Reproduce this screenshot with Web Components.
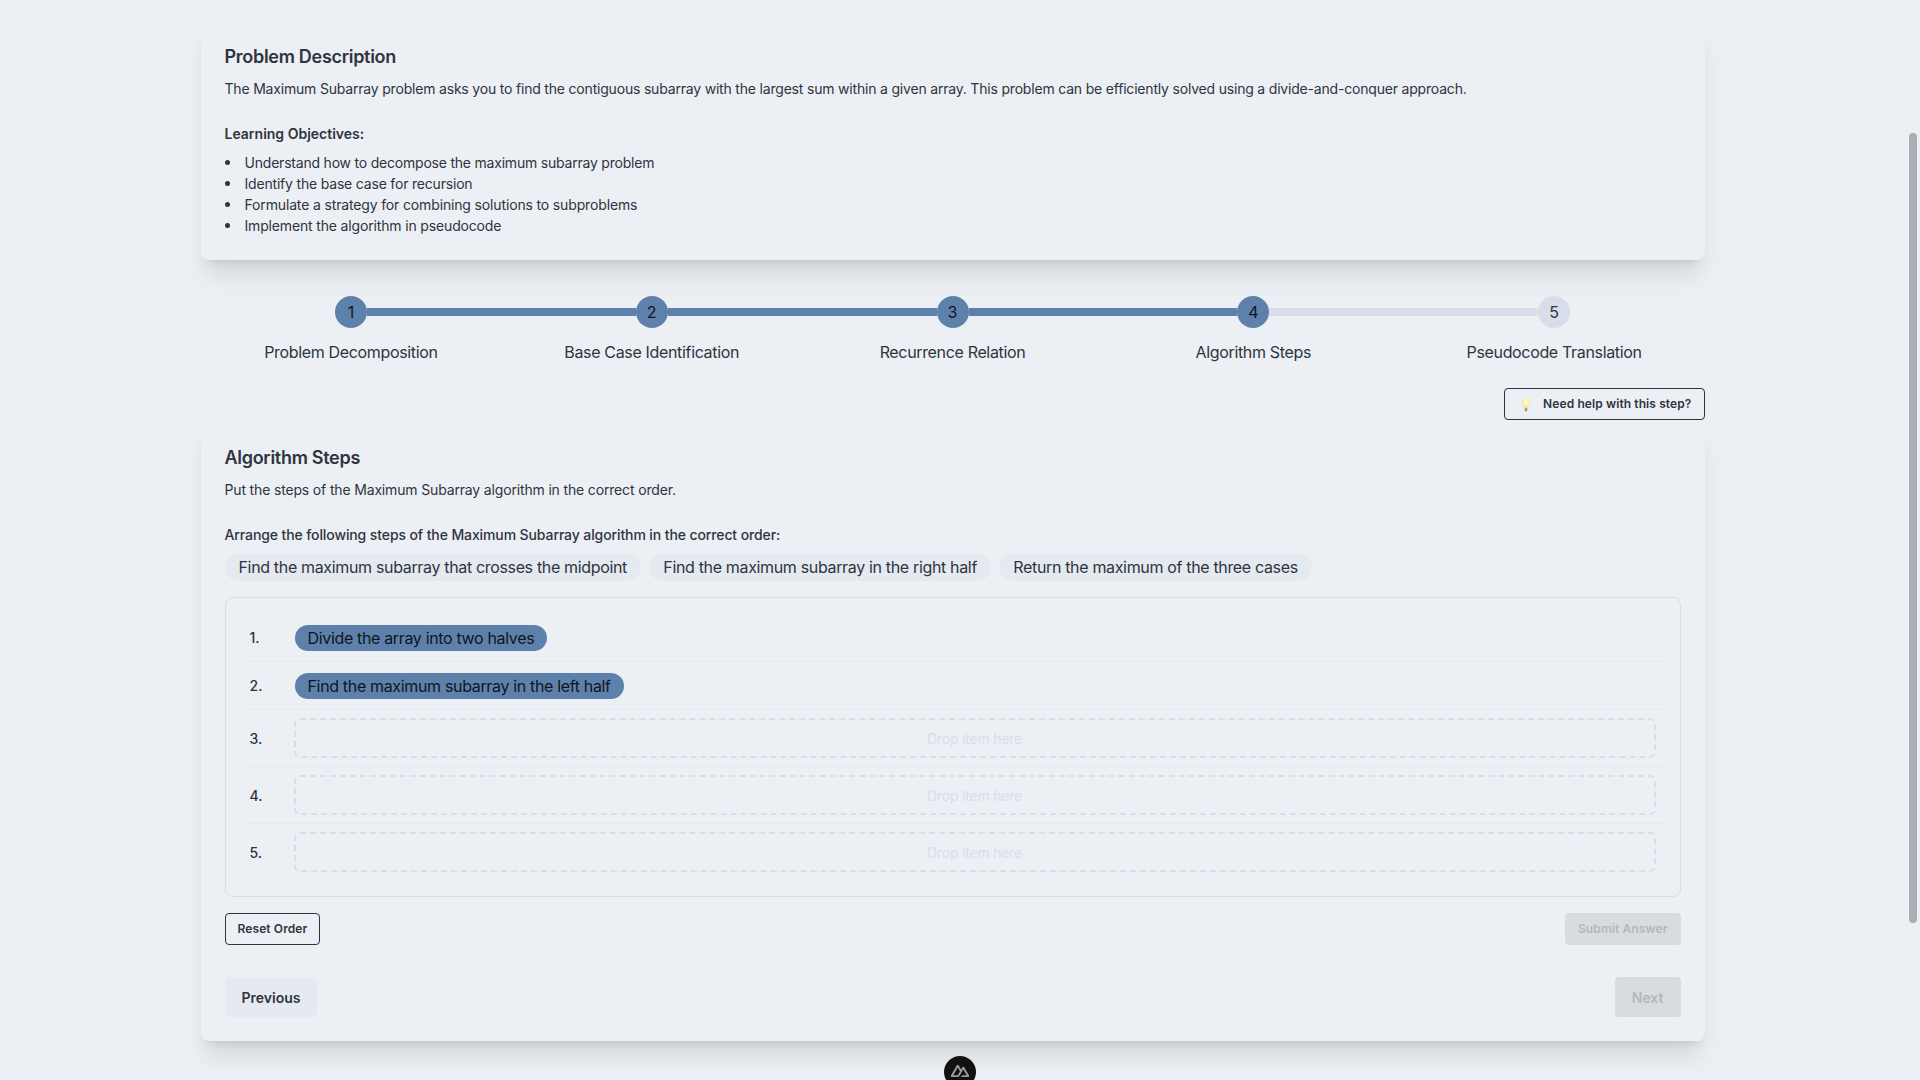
<!DOCTYPE html>
<html lang="en">
<head>
<meta charset="utf-8">
<title>Maximum Subarray</title>
<style>
html,body{margin:0;padding:0;height:100%;overflow:hidden;background:#eceff4;}
body{font-family:Inter,"Liberation Sans",sans-serif;color:#2e3440;}
</style>
</head>
<body>
<lesson-app>
  <lesson-card heading="Problem Description">
    <card-text style="letter-spacing:-.192px">The Maximum Subarray problem asks you to find the contiguous subarray with the largest sum within a given array. This problem can be efficiently solved using a divide-and-conquer approach.</card-text>
    <objective-list heading="Learning Objectives:">
      <li-item style="letter-spacing:-.21px">Understand how to decompose the maximum subarray problem</li-item>
      <li-item>Identify the base case for recursion</li-item>
      <li-item style="letter-spacing:-.148px">Formulate a strategy for combining solutions to subproblems</li-item>
      <li-item style="letter-spacing:-.157px">Implement the algorithm in pseudocode</li-item>
    </objective-list>
  </lesson-card>

  <step-tracker>
    <step-item n="1" state="done" first>Problem Decomposition</step-item>
    <step-item n="2" state="done">Base Case Identification</step-item>
    <step-item n="3" state="done">Recurrence Relation</step-item>
    <step-item n="4" state="current">Algorithm Steps</step-item>
    <step-item n="5" state="todo" last>Pseudocode Translation</step-item>
  </step-tracker>

  <help-row><ui-button kind="outline" bulb>Need help with this step?</ui-button></help-row>

  <lesson-card heading="Algorithm Steps">
    <card-text style="letter-spacing:-.16px">Put the steps of the Maximum Subarray algorithm in the correct order.</card-text>
    <order-exercise prompt="Arrange the following steps of the Maximum Subarray algorithm in the correct order:">
      <choice-pill slot="choices">Find the maximum subarray that crosses the midpoint</choice-pill>
      <choice-pill slot="choices">Find the maximum subarray in the right half</choice-pill>
      <choice-pill slot="choices">Return the maximum of the three cases</choice-pill>
      <order-row n="1."><choice-pill placed>Divide the array into two halves</choice-pill></order-row>
      <order-row n="2."><choice-pill placed>Find the maximum subarray in the left half</choice-pill></order-row>
      <order-row n="3." empty><drop-slot></drop-slot></order-row>
      <order-row n="4." empty><drop-slot></drop-slot></order-row>
      <order-row n="5." empty last><drop-slot></drop-slot></order-row>
      <ui-button slot="left" kind="outline">Reset Order</ui-button>
      <ui-button slot="right" kind="disabled">Submit Answer</ui-button>
    </order-exercise>
    <nav-row>
      <ui-button slot="left" kind="soft" size="lg">Previous</ui-button>
      <ui-button slot="right" kind="disabled" size="lg">Next</ui-button>
    </nav-row>
  </lesson-card>
</lesson-app>
<fake-scrollbar></fake-scrollbar>
<devtools-badge></devtools-badge>

<script>
function def(name, css, html, init){
  customElements.define(name, class extends HTMLElement{
    constructor(){super();this.attachShadow({mode:'open'});}
    connectedCallback(){
      const a=n=>this.getAttribute(n)||'';
      this.shadowRoot.innerHTML='<style>'+css+'</style>'+(typeof html==='function'?html(a,this):html);
    }
  });
}
def('lesson-app',`:host{display:block;width:1905px;box-sizing:border-box;padding:19px 200.5px 0;}`,`<slot></slot>`);
def('lesson-card',`:host{display:block;background:#eceff4;border-radius:8px;padding:24px;box-shadow:0 20px 25px -5px rgba(0,0,0,.1),0 8px 10px -6px rgba(0,0,0,.1);}
h2{margin:0 0 7px;font-size:18px;line-height:28px;font-weight:600;letter-spacing:-.29px;color:#2e3440;}`,a=>`<h2>${a('heading')}</h2><slot></slot>`);
def('card-text',`:host{display:block;font-size:14px;line-height:21px;letter-spacing:-.187px;color:#2e3440;margin-bottom:24px;}`,`<slot></slot>`);
def('objective-list',`:host{display:block;font-size:14px;line-height:21px;color:#2e3440;}
h3{margin:0 0 8px;font-size:14px;line-height:21px;font-weight:600;}`,a=>`<h3>${a('heading')}</h3><slot></slot>`);
def('li-item',`:host{display:flex;font-size:14px;line-height:21px;letter-spacing:-.19px;}
i{width:20px;flex:none;display:flex;align-items:center;}
i::before{content:"";width:5px;height:5px;border-radius:50%;background:#2e3440;margin-left:0;}`,`<i></i><span><slot></slot></span>`);
def('step-tracker',`:host{display:flex;margin-top:36px;}`,`<slot></slot>`);
def('step-item',`:host{display:flex;flex-direction:column;flex:1 1 0;min-width:0;}
.top{display:flex;align-items:center;height:32px;}
.ln{flex:1;height:8px;}
.c{width:32px;height:32px;border-radius:50%;flex:none;display:flex;align-items:center;justify-content:center;font-size:16px;line-height:24px;}
.lbl{margin-top:12px;text-align:center;font-size:16px;line-height:24px;letter-spacing:-.34px;color:#2e3440;}`,
(a,el)=>{
  const st=a('state'),blue='#5e81ac',grey='#d8dee9';
  const left=el.hasAttribute('first')?'transparent':(st==='todo'?grey:blue);
  const right=el.hasAttribute('last')?'transparent':(st==='done'?blue:grey);
  const bg=st==='todo'?grey:blue,col=st==='todo'?'#2e3440':'#0f1520';
  return `<div class="top"><div class="ln" style="background:${left}"></div><div class="c" style="background:${bg};color:${col}">${a('n')}</div><div class="ln" style="background:${right}"></div></div><div class="lbl"><slot></slot></div>`;
});
def('help-row',`:host{display:flex;justify-content:flex-end;margin-top:24px;}`,`<slot></slot>`);
def('ui-button',`:host{display:inline-flex;align-items:center;box-sizing:border-box;height:32px;padding:0 13px;border-radius:4px;font-size:12px;font-weight:600;line-height:16px;letter-spacing:.1px;white-space:nowrap;color:#2e3440;}
:host([kind=outline]){border:1px solid #2e3440;padding:0 12px;}
:host([kind=soft]){background:#e5e9f0;}
:host([kind=disabled]){background:#d8dbe0;color:#b4b7bd;}
:host([size=lg]){height:40px;padding:2px 17px 0;font-size:14px;line-height:20px;letter-spacing:0;}
svg{width:10px;height:15px;margin:0 12px 0 4px;flex:none;}`,(a,el)=>el.hasAttribute('bulb')?`<svg viewBox="0 0 12 16" preserveAspectRatio="none" aria-hidden="true"><defs><radialGradient id="g" cx=".5" cy=".4" r=".6"><stop offset="0" stop-color="#fffbe6"/><stop offset=".6" stop-color="#fff2ae"/><stop offset="1" stop-color="#f6d873"/></radialGradient></defs><path d="M6 .8C3.100.8 1.300 2.900 1.300 5.200c0 2.400 2.200 3.900 2.900 6.600h3.600c.7-2.700 2.900-4.200 2.900-6.600C10.700 2.900 8.900.8 6 .8z" fill="url(#g)"/><path d="M4.400 12h3.200v1.800L6.700 15.400H5.300L4.400 13.800z" fill="#8d8f92"/></svg><slot></slot>`:`<slot></slot>`);
def('order-exercise',`:host{display:block;}
.p{font-size:14px;line-height:21px;font-weight:500;letter-spacing:-.107px;color:#2e3440;margin-bottom:8px;}
.ch{display:flex;gap:8px;margin-bottom:16px;}
.box{border:1px solid #d8dee9;border-radius:8px;padding:16px;box-sizing:border-box;}
.act{display:flex;justify-content:space-between;margin-top:16px;}`,
a=>`<div class="p">${a('prompt')}</div><div class="ch"><slot name="choices"></slot></div><div class="box"><slot></slot></div><div class="act"><slot name="left"></slot><slot name="right"></slot></div>`);
def('choice-pill',`:host{display:inline-flex;align-items:center;box-sizing:border-box;height:28px;padding:0 14.3px 0 14px;border-radius:999px;background:#e5e9f0;font-size:16px;line-height:24px;letter-spacing:-.34px;color:#2e3440;white-space:nowrap;}
:host([placed]){height:26px;padding:0 13px 0 12.5px;background:#5e81ac;color:#0f1520;margin-left:1.5px;}`,`<slot></slot>`);
def('order-row',`:host{display:flex;align-items:center;padding:8px;border-bottom:1px solid #e5e9f0;min-height:31px;}
:host([last]){border-bottom:0;}
.n{width:44px;flex:none;font-size:14px;line-height:20px;font-weight:500;color:#2e3440;}
:host([empty]) .n{padding-top:2px;}
.s{flex:1;min-width:0;display:flex;}`,a=>`<div class="n">${a('n')}</div><div class="s"><slot></slot></div>`);
def('drop-slot',`:host{display:flex;align-items:center;justify-content:center;flex:1;box-sizing:border-box;height:40px;border:2px dashed #d8dee9;border-radius:6px;font-size:14px;letter-spacing:-.2px;color:#d8dee9;}`,`Drop item here`);
def('nav-row',`:host{display:flex;justify-content:space-between;margin-top:32px;}`,`<slot name="left"></slot><slot name="right"></slot>`);
def('fake-scrollbar',`:host{position:fixed;left:1909px;top:133px;width:8px;height:790px;border-radius:4px;background:#a9adb4;}`,``);
def('devtools-badge',`:host{position:fixed;left:944px;top:1056px;width:32px;height:32px;border-radius:50%;background:#111;display:flex;justify-content:center;padding-top:4px;box-sizing:border-box;}
svg{width:22px;height:22px;}`,`<svg viewBox="0 0 512 512" aria-hidden="true"><path fill="#999" d="M281.44 397.667H438.32C443.326 397.667 448.118 395.908 452.453 393.427C456.789 390.946 461.258 387.831 463.76 383.533C466.262 379.236 468.002 374.36 468 369.399C467.998 364.437 466.266 359.563 463.76 355.268L357.76 172.947C355.258 168.65 352.201 165.534 347.867 163.053C343.532 160.573 337.325 158.813 332.32 158.813C327.315 158.813 322.521 160.573 318.187 163.053C313.852 165.534 310.795 168.65 308.293 172.947L281.44 219.587L227.733 129.13C225.229 124.834 222.176 120.307 217.84 117.827C213.504 115.346 208.713 115 203.707 115C198.701 115 193.909 115.346 189.573 117.827C185.238 120.307 180.771 124.834 178.267 129.13L46.8267 355.268C44.3208 359.563 44.0022 364.437 44 369.399C43.9978 374.36 44.3246 379.235 46.8267 383.533C49.3288 387.83 53.7979 390.946 58.1333 393.427C62.4688 395.908 67.2603 397.667 72.2667 397.667H171.2C210.401 397.667 238.934 380.082 258.8 346.787L306.88 263.893L332.32 219.587L410.053 352.44H306.88L281.44 397.667ZM169.787 352.44H100.533L203.707 174.36L256 263.893L221.361 324.208C208.151 345.791 193.089 352.44 169.787 352.44Z"/></svg>`);
</script>
</body>
</html>
